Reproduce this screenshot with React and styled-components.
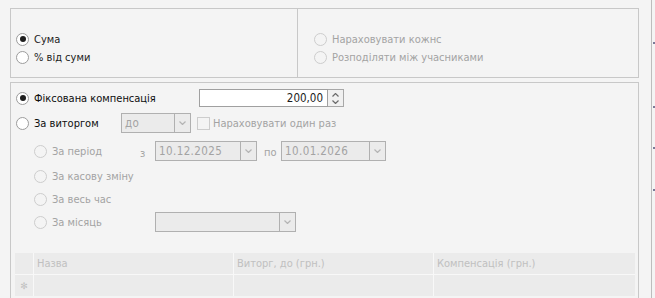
import React from 'react'
import styled, { createGlobalStyle, css } from 'styled-components'

const Global = createGlobalStyle`
  body {
    margin: 0;
    background: #f4f4f4;
    font-family: "DejaVu Sans Condensed", "Liberation Sans", Arial, sans-serif;
    font-size: 11px;
    overflow: hidden;
  }
`

const Page = styled.div`
  display: flex;
  width: 655px;
  height: 298px;
  overflow: hidden;
`

const Main = styled.div`
  width: 629px;
  margin: 8px 0 0 10px;
`

const Strip = styled.div`
  margin-left: auto;
  width: 3px;
  height: 298px;
  border-left: 1px solid #bdbdbd;
  display: flex;
  flex-direction: column;
  align-items: flex-end;
`

const Tick = styled.div`
  width: 2px;
  height: 2px;
  background: #7a7a98;
  margin-top: ${ ({ $top }) => $top }px;
`

const Panel = styled.div`
  border: 1px solid #c8c8c8;
  box-sizing: border-box;
`

const TopPanel = styled(Panel)`
  height: 70px;
  display: grid;
  grid-template-columns: 286px 1fr;
`

const Column = styled.div`
  padding: 21px 0 0 5px;
  display: flex;
  flex-direction: column;
  ${ ({ $divider }) => $divider && css`
    border-left: 1px solid #c8c8c8;
    padding-left: 16px;
  ` }
`

const BottomPanel = styled(Panel)`
  margin-top: 4px;
  height: 230px;
  border-bottom: none;
  padding: 6px 0 0 5px;
`

const Row = styled.div`
  display: flex;
  align-items: center;
  height: ${ ({ $h }) => $h || 18 }px;
  margin-top: ${ ({ $top }) => $top || 0 }px;
  padding-left: ${ ({ $indent }) => $indent ? 18 : 0 }px;
`

const Option = styled.label`
  display: flex;
  align-items: center;
  gap: ${ ({ $gap }) => $gap || 5 }px;
  width: ${ ({ $w }) => $w ? `${ $w }px` : 'auto' };
  flex: none;
  white-space: nowrap;
  color: ${ ({ $disabled }) => $disabled ? '#a3a3a3' : '#1c1c1c' };
  ${ ({ $strong }) => $strong && css`
    color: #0e0e0e;
  ` }
`

const Radio = styled.span`
  width: 11px;
  height: 11px;
  border-radius: 50%;
  border: 1px solid ${ ({ $disabled }) => $disabled ? '#cdcdcd' : '#9c9c9c' };
  background: ${ ({ $disabled }) => $disabled ? '#f4f4f4' : '#fff' };
  display: flex;
  align-items: center;
  justify-content: center;
  flex: none;

  &::after {
    content: '';
    width: 6px;
    height: 6px;
    border-radius: 50%;
    background: #1e1e1e;
    display: ${ ({ $checked }) => $checked ? 'block' : 'none' };
  }
`

const Check = styled.span`
  width: 11px;
  height: 11px;
  border: 1px solid #cdcdcd;
  background: #f4f4f4;
  flex: none;
`

const Select = styled.div`
  display: flex;
  width: ${ ({ $w }) => $w }px;
  height: 20px;
  box-sizing: border-box;
  border: 1px solid #b0b0b0;
  background: #ebebeb;
  flex: none;
`

const SelectText = styled.div`
  flex: 1;
  padding-left: 3px;
  display: flex;
  align-items: center;
  color: #a3a3a3;
  font-size: 11.5px;
  letter-spacing: 0.4px;
`

const SelectButton = styled.div`
  width: 15px;
  border-left: 1px solid #b0b0b0;
  display: flex;
  align-items: center;
  justify-content: center;
`

const Small = styled.span`
  color: #a3a3a3;
  flex: none;
  width: ${ ({ $w }) => $w }px;
  padding-top: ${ ({ $drop }) => $drop || 0 }px;
`

const NumberBox = styled.div`
  display: flex;
  height: 18px;
`

const NumberInput = styled.div`
  width: 129px;
  box-sizing: border-box;
  border: 1px solid #a0a0a0;
  background: #fff;
  display: flex;
  align-items: center;
  justify-content: flex-end;
  padding-right: 4px;
  color: #1c1c1c;
  font-size: 11.5px;
`

const Spinner = styled.div`
  width: 16px;
  box-sizing: border-box;
  border: 1px solid #a8a8a8;
  border-left: none;
  background: #f0f0f0;
  display: flex;
  flex-direction: column;
  align-items: center;
  justify-content: center;
  gap: 3px;
`

const Table = styled.div`
  margin: 21px 0 0 -1px;
  width: 620px;
  display: grid;
  grid-template-columns: 18px 199px 199px 1fr;
  grid-auto-rows: 21px;
  gap: 1px;
  background: #f8f8f8;
`

const Cell = styled.div`
  background: #ebebeb;
  color: #c0c0c0;
  display: flex;
  align-items: center;
  padding-left: ${ ({ $center }) => $center ? 0 : 3 }px;
  justify-content: ${ ({ $center }) => $center ? 'center' : 'flex-start' };
  font-size: ${ ({ $tiny }) => $tiny ? '9px' : '11px' };
  font-family: ${ ({ $tiny }) => $tiny ? '"DejaVu Sans", sans-serif' : 'inherit' };
`

const Chevron = ({ up, color = '#b4b4b4' }) => (
  <svg width="7" height="4" viewBox="0 0 7 4">
    <polyline
      points={ up ? '0.5,3.5 3.5,0.5 6.5,3.5' : '0.5,0.5 3.5,3.5 6.5,0.5' }
      fill="none"
      stroke={ color }
      strokeWidth="1.2"
    />
  </svg>
)

const Dropdown = ({ w, value }) => (
  <Select $w={ w }>
    <SelectText>{ value }</SelectText>
    <SelectButton><Chevron /></SelectButton>
  </Select>
)

const RadioOption = ({ children, checked, disabled, strong, w }) => (
  <Option $disabled={ disabled } $strong={ strong } $w={ w }>
    <Radio $checked={ checked } $disabled={ disabled } />
    { children }
  </Option>
)

const App = () => (
  <Page>
    <Global />
    <Main>
      <TopPanel>
        <Column>
          <Row><RadioOption checked>Сума</RadioOption></Row>
          <Row><RadioOption>% від суми</RadioOption></Row>
        </Column>
        <Column $divider>
          <Row><RadioOption disabled>Нараховувати кожнс</RadioOption></Row>
          <Row><RadioOption disabled>Розподіляти між учасниками</RadioOption></Row>
        </Column>
      </TopPanel>

      <BottomPanel>
        <Row>
          <RadioOption checked strong w={ 183 }>Фіксована компенсація</RadioOption>
          <NumberBox>
            <NumberInput>200,00</NumberInput>
            <Spinner>
              <Chevron up color="#6a6a6a" />
              <Chevron color="#6a6a6a" />
            </Spinner>
          </NumberBox>
        </Row>
        <Row $h={ 20 } $top={ 6 }>
          <RadioOption strong w={ 105 }>За виторгом</RadioOption>
          <Dropdown w={ 70 } value="до" />
          <Option $disabled $gap={ 3 } style={ { marginLeft: 6 } }>
            <Check />
            Нараховувати один раз
          </Option>
        </Row>
        <Row $h={ 20 } $top={ 8 } $indent>
          <RadioOption disabled w={ 106 }>За період</RadioOption>
          <Small $w={ 15 } $drop={ 4 }>з</Small>
          <Dropdown w={ 102 } value="10.12.2025" />
          <Small $w={ 17 } $drop={ 2 } style={ { marginLeft: 7 } }>по</Small>
          <Dropdown w={ 105 } value="10.01.2026" />
        </Row>
        <Row $h={ 20 } $top={ 5 } $indent>
          <RadioOption disabled>За касову зміну</RadioOption>
        </Row>
        <Row $h={ 20 } $top={ 3 } $indent>
          <RadioOption disabled>За весь час</RadioOption>
        </Row>
        <Row $h={ 20 } $top={ 3 } $indent>
          <RadioOption disabled w={ 121 }>За місяць</RadioOption>
          <Dropdown w={ 141 } value="" />
        </Row>

        <Table>
          <Cell />
          <Cell>Назва</Cell>
          <Cell>Виторг, до (грн.)</Cell>
          <Cell>Компенсація (грн.)</Cell>
          <Cell $center $tiny>✻</Cell>
          <Cell />
          <Cell />
          <Cell />
        </Table>
      </BottomPanel>
    </Main>
    <Strip>
      <Tick $top={ 42 } />
      <Tick $top={ 62 } />
      <Tick $top={ 39 } />
      <Tick $top={ 40 } />
    </Strip>
  </Page>
)

export default App
